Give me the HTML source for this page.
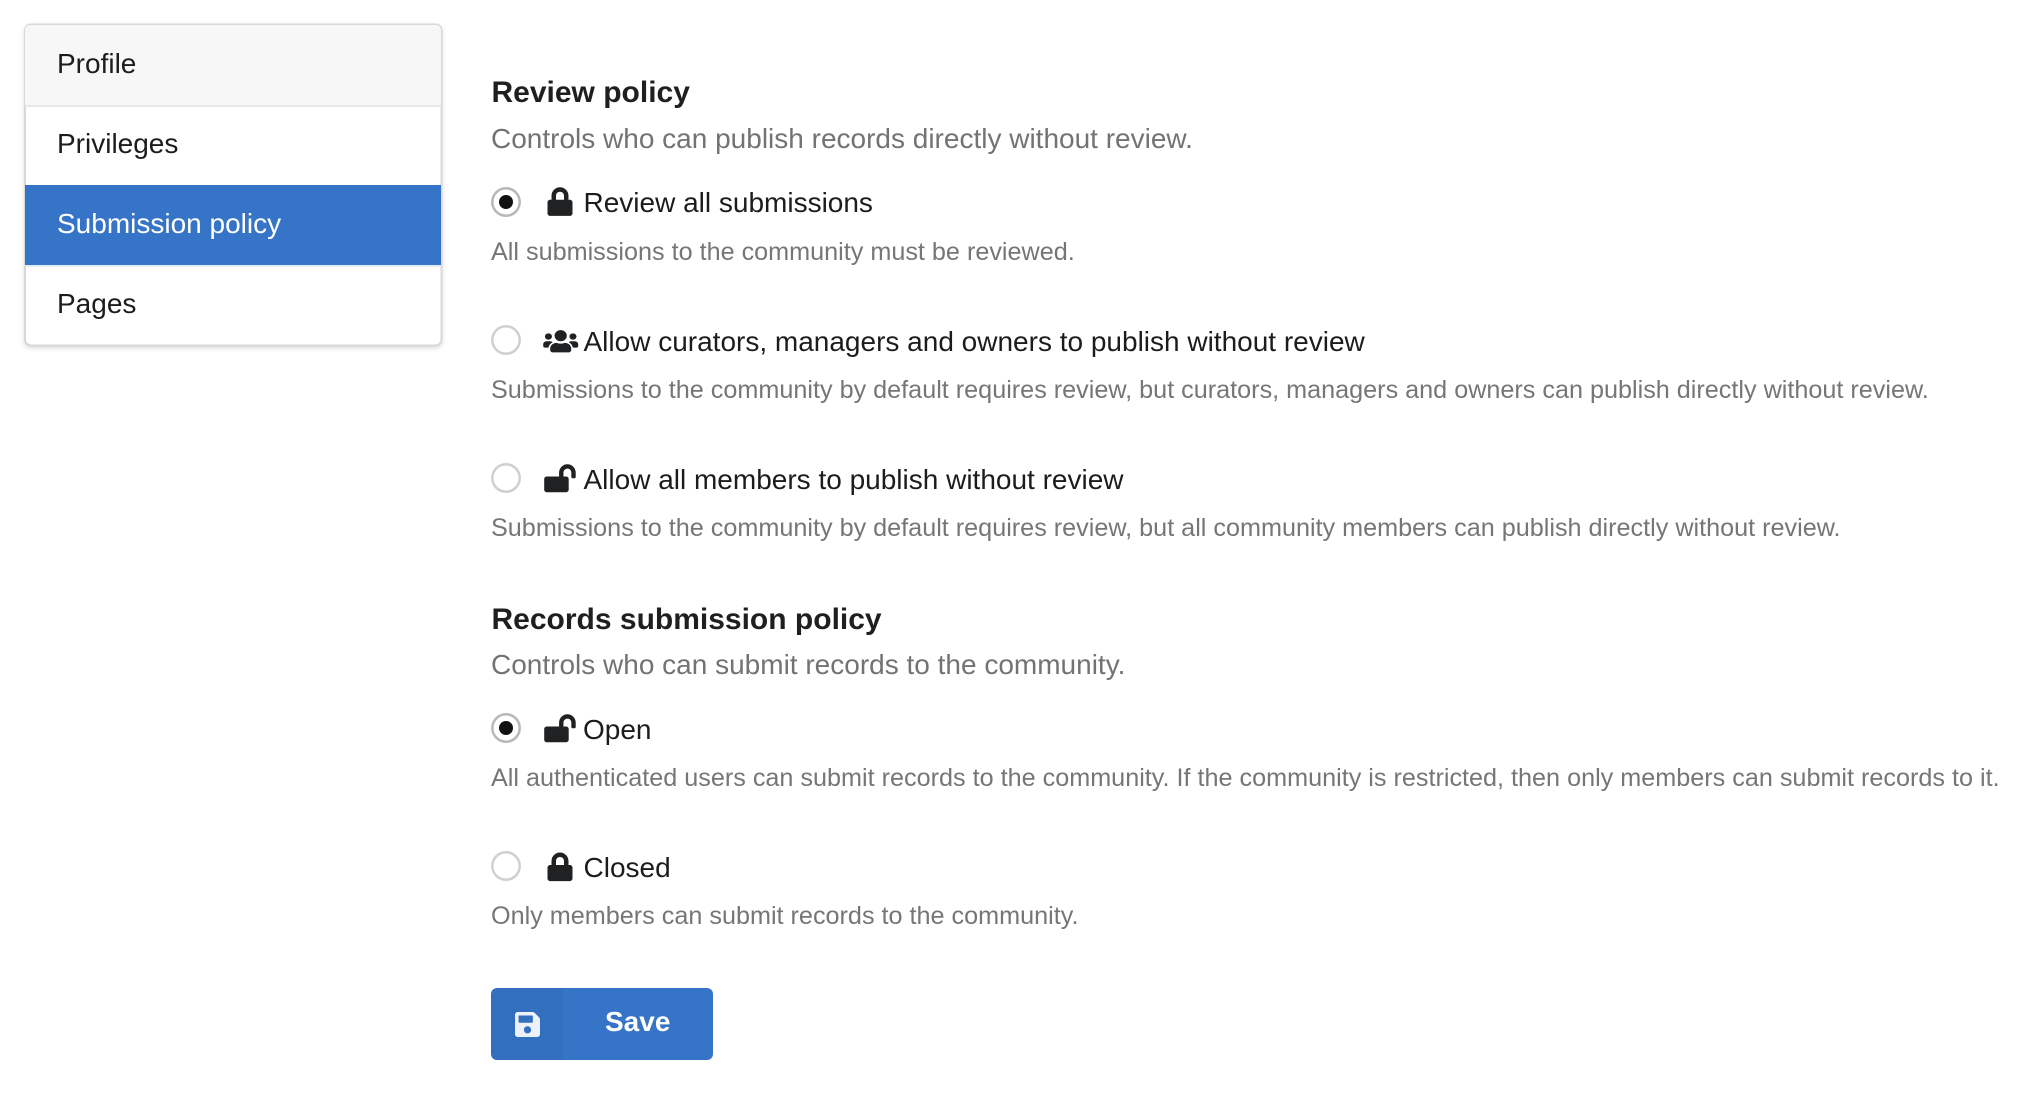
<!DOCTYPE html>
<html><head><meta charset="utf-8">
<style>
html,body{margin:0;padding:0;background:#fff;width:2030px;height:1094px;overflow:hidden}
svg{display:block;font-family:"Liberation Sans",Arial,sans-serif}
.h{font-weight:700;font-size:30px;fill:#1f1f20}
.s{font-size:28px;fill:#737373}
.l{font-size:28px;fill:#1b1c1d}
.d{font-size:25.2px;fill:#767676}
.r{fill:#fff;stroke:#d0d0d1;stroke-width:2.5}
.rc{fill:#fff;stroke:#b8b8b9;stroke-width:2.5}
.i{fill:#202122}
</style></head><body>
<svg width="2030" height="1094" viewBox="0 0 2030 1094" xmlns="http://www.w3.org/2000/svg">
<defs>
<filter id="sh" x="-5%" y="-5%" width="110%" height="110%"><feDropShadow dx="0" dy="2" stdDeviation="2" flood-color="#000" flood-opacity=".13"/></filter>
<path id="lock" d="M400 224h-24v-72C376 68.2 307.8 0 224 0S72 68.2 72 152v72H48c-26.5 0-48 21.5-48 48v192c0 26.5 21.5 48 48 48h352c26.5 0 48-21.5 48-48V272c0-26.5-21.5-48-48-48zm-104 0H152v-72c0-39.7 32.3-72 72-72s72 32.3 72 72v72z"/>
<path id="open" d="M423.5 0C339.5.3 272 69.5 272 153.5V224H48c-26.5 0-48 21.5-48 48v192c0 26.5 21.5 48 48 48h352c26.5 0 48-21.5 48-48V272c0-26.5-21.5-48-48-48h-48v-71.1c0-39.6 31.7-72.5 71.3-72.9 40-.4 72.7 32.1 72.7 72v80c0 13.3 10.7 24 24 24h32c13.3 0 24-10.7 24-24v-80C576 68 507.5-.3 423.5 0z"/>
</defs>

<!-- sidebar -->
<rect x="25" y="24.500" width="416.500" height="321" rx="6" fill="#fff" stroke="#d8d8d9" stroke-width="2" filter="url(#sh)"/>
<path d="M25 105V30a5 5 0 0 1 5-5H436a5 5 0 0 1 5 5V105Z" fill="#f7f7f7"/>
<rect x="25" y="105" width="416" height="2" fill="#e8e8e8"/>
<rect x="25" y="185" width="416" height="80" fill="#3574c6"/>
<rect x="25" y="265" width="416" height="2" fill="#e4ebf5"/>
<text x="57" y="73" class="l">Profile</text>
<text x="57" y="153" class="l">Privileges</text>
<text x="57" y="233" class="l" style="fill:#fff">Submission policy</text>
<text x="57" y="313" class="l">Pages</text>

<!-- review policy -->
<text x="491.500" y="102" class="h">Review policy</text>
<text x="491" y="148" class="s">Controls who can publish records directly without review.</text>

<circle cx="506" cy="202" r="13.700" class="rc"/><circle cx="506" cy="202" r="7" fill="#111"/>
<use href="#lock" class="i" transform="translate(547.500 187.300) scale(.0558)"/>
<text x="583.500" y="212" class="l">Review all submissions</text>
<text x="491" y="260" class="d">All submissions to the community must be reviewed.</text>

<circle cx="506" cy="340" r="13.700" class="r"/>
<path class="i" transform="translate(543.200 328.600) scale(.0547 .0495)" d="M96 224c35.300 0 64-28.700 64-64s-28.700-64-64-64-64 28.700-64 64 28.700 64 64 64zm448 0c35.300 0 64-28.700 64-64s-28.700-64-64-64-64 28.700-64 64 28.700 64 64 64zm32 32h-64c-17.600 0-33.500 7.100-45.100 18.600 40.300 22.100 68.900 62 75.100 109.400h66c17.700 0 32-14.300 32-32v-32c0-35.300-28.700-64-64-64zm-256 0c61.900 0 112-50.100 112-112S381.900 32 320 32 208 82.100 208 144s50.100 112 112 112zm76.800 32h-8.300c-20.800 10-43.900 16-68.500 16s-47.600-6-68.500-16h-8.300C179.600 288 128 339.600 128 403.200V432c0 26.500 21.500 48 48 48h288c26.500 0 48-21.500 48-48v-28.800c0-63.600-51.600-115.200-115.200-115.200zm-223.700-13.400C161.500 263.100 145.600 256 128 256H64c-35.300 0-64 28.700-64 64v32c0 17.700 14.300 32 32 32h65.900c6.300-47.400 34.900-87.300 75.200-109.400z"/>
<text x="583.500" y="351" class="l">Allow curators, managers and owners to publish without review</text>
<text x="491" y="398" class="d">Submissions to the community by default requires review, but curators, managers and owners can publish directly without review.</text>

<circle cx="506" cy="478" r="13.700" class="r"/>
<use href="#open" class="i" transform="translate(544.200 464.300) scale(.0547)"/>
<text x="583.500" y="489" class="l">Allow all members to publish without review</text>
<text x="491" y="536" class="d">Submissions to the community by default requires review, but all community members can publish directly without review.</text>

<!-- records submission policy -->
<text x="491.500" y="629" class="h">Records submission policy</text>
<text x="491" y="674" class="s">Controls who can submit records to the community.</text>

<circle cx="506" cy="728" r="13.700" class="rc"/><circle cx="506" cy="728" r="7" fill="#111"/>
<use href="#open" class="i" transform="translate(544.200 714.300) scale(.0547)"/>
<text x="583" y="739" class="l">Open</text>
<text x="491" y="786" class="d">All authenticated users can submit records to the community. If the community is restricted, then only members can submit records to it.</text>

<circle cx="506" cy="866" r="13.700" class="r"/>
<use href="#lock" class="i" transform="translate(547.500 852.500) scale(.0558)"/>
<text x="583.500" y="877" class="l">Closed</text>
<text x="491" y="924" class="d">Only members can submit records to the community.</text>

<!-- save button -->
<rect x="491" y="988" width="222" height="72" rx="6" fill="#3574c6"/>
<path d="M563 988H497a6 6 0 0 0-6 6V1054a6 6 0 0 0 6 6H563Z" fill="#000" fill-opacity=".04"/>
<path fill="#eaf1fa" transform="translate(515 1010.200) scale(.0558)" d="M433.941 129.941l-83.882-83.882A48 48 0 0 0 316.118 32H48C21.490 32 0 53.490 0 80v352c0 26.510 21.490 48 48 48h352c26.510 0 48-21.490 48-48V163.882a48 48 0 0 0-14.059-33.941zM224 416c-35.346 0-64-28.654-64-64 0-35.346 28.654-64 64-64s64 28.654 64 64c0 35.346-28.654 64-64 64zm96-304.520V212c0 6.627-5.373 12-12 12H76c-6.627 0-12-5.373-12-12V108c0-6.627 5.373-12 12-12h228.520c3.183 0 6.235 1.264 8.485 3.515l3.480 3.480A11.996 11.996 0 0 1 320 111.480z"/>
<text x="605" y="1031" style="font-weight:700;font-size:28px;fill:#fff">Save</text>
</svg>
</body></html>
